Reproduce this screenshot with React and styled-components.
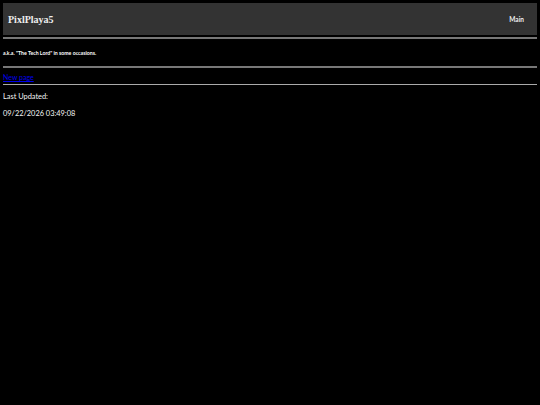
import React from "react";
import styled, { createGlobalStyle } from "styled-components";

const Global = createGlobalStyle`
  html, body { margin: 0; padding: 0; background: #000; }
  body { min-height: 405px; }
`;
const Page = styled.div`
  padding: 3px;
  color: #fff;
  font-family: "Lato", "Open Sans", sans-serif;
`;
const Header = styled.header`
  height: 32px;
  background: #333;
  display: flex;
  align-items: center;
  justify-content: space-between;
  padding: 0 13px 0 5px;
`;
const Title = styled.h1`
  margin: 0;
  font: bold 10px "Liberation Serif", serif;
  color: #eee;
`;
const NavLink = styled.span`
  font-size: 6.5px;
  font-weight: bold;
  color: #eee;
`;
const Rule = styled.hr`
  height: ${(p) => p.$h || 1}px;
  border: 0;
  margin: ${(p) => p.$mt || 0}px 0 0;
  background: ${(p) => p.$color || "#aaa"};
`;
const Tagline = styled.p`
  margin: 11px 0 9px;
  font-size: 5.2px;
  font-weight: bold;
  line-height: 7px;
`;
const PageLink = styled.a`
  display: block;
  margin-top: 4px;
  height: 12px;
  font-size: 7px;
  line-height: 10px;
  color: #00e;
  text-decoration: underline;
`;
const Meta = styled.p`
  margin: ${(p) => p.$mt}px 0 0;
  font-size: 7.4px;
  line-height: 10px;
  color: #f4f4f4;
`;

export default function App() {
  return (
    <>
      <Global />
      <Page>
        <Header>
          <Title>PixlPlaya5</Title>
          <NavLink>Main</NavLink>
        </Header>
        <Rule $mt={2} $h={2} $color="#777" />
        <Tagline>a.k.a. "The Tech Lord" in some occasions.</Tagline>
        <Rule $h={2} $color="#777" />
        <PageLink href="#">New page</PageLink>
        <Rule $color="#aaa" />
        <Meta $mt={7}>Last Updated:</Meta>
        <Meta $mt={7}>09/22/2026 03:49:08</Meta>
      </Page>
    </>
  );
}
